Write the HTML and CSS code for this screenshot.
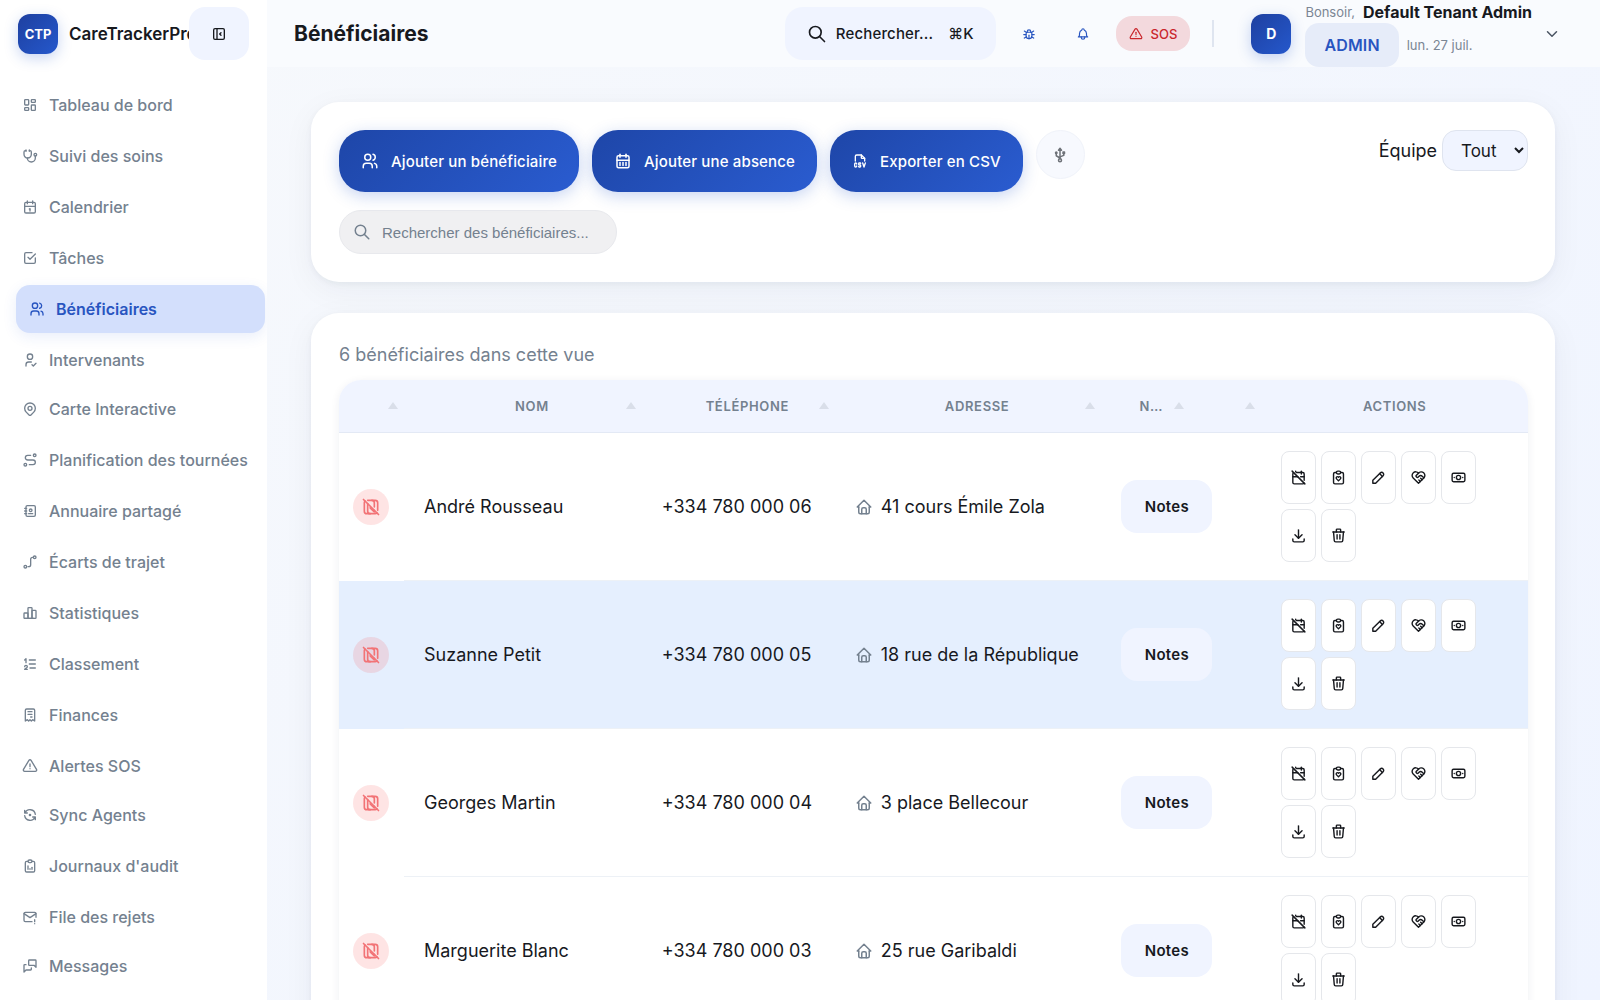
FILE: index.html
```html
<!DOCTYPE html>
<html lang="fr">
<head>
    <meta charset="UTF-8">
    <meta name="viewport" content="width=device-width, initial-scale=1.0">
    <title>Bénéficiaires - CareTrackerPro</title>
    <link rel="stylesheet" href="styles.css">
</head>
<body>
    <!-- Icons -->
    <svg class="sprite" aria-hidden="true">
        <symbol id="i-collapse" viewBox="0 0 24 24"><path d="M4 6a2 2 0 0 1 2 -2h12a2 2 0 0 1 2 2v12a2 2 0 0 1 -2 2h-12a2 2 0 0 1 -2 -2z"/><path d="M9 4v16"/><path d="M15 10l-2 2l2 2"/></symbol>
        <symbol id="i-dashboard" viewBox="0 0 24 24"><path d="M5 4h4a1 1 0 0 1 1 1v6a1 1 0 0 1 -1 1h-4a1 1 0 0 1 -1 -1v-6a1 1 0 0 1 1 -1"/><path d="M5 16h4a1 1 0 0 1 1 1v2a1 1 0 0 1 -1 1h-4a1 1 0 0 1 -1 -1v-2a1 1 0 0 1 1 -1"/><path d="M15 12h4a1 1 0 0 1 1 1v6a1 1 0 0 1 -1 1h-4a1 1 0 0 1 -1 -1v-6a1 1 0 0 1 1 -1"/><path d="M15 4h4a1 1 0 0 1 1 1v2a1 1 0 0 1 -1 1h-4a1 1 0 0 1 -1 -1v-2a1 1 0 0 1 1 -1"/></symbol>
        <symbol id="i-stethoscope" viewBox="0 0 24 24"><path d="M6 4h-1a2 2 0 0 0 -2 2v3.500a5.500 5.500 0 0 0 11 0v-3.500a2 2 0 0 0 -2 -2h-1"/><path d="M8 15a6 6 0 1 0 12 0v-3"/><path d="M11 3v2"/><path d="M6 3v2"/><path d="M20 10m-2 0a2 2 0 1 0 4 0a2 2 0 1 0 -4 0"/></symbol>
        <symbol id="i-calendar" viewBox="0 0 24 24"><path d="M4 7a2 2 0 0 1 2 -2h12a2 2 0 0 1 2 2v12a2 2 0 0 1 -2 2h-12a2 2 0 0 1 -2 -2v-12z"/><path d="M16 3v4"/><path d="M8 3v4"/><path d="M4 11h16"/><path d="M11 15h1"/><path d="M12 15v3"/></symbol>
        <symbol id="i-check" viewBox="0 0 24 24"><path d="M9 11l3 3l8 -8"/><path d="M20 12v6a2 2 0 0 1 -2 2h-12a2 2 0 0 1 -2 -2v-12a2 2 0 0 1 2 -2h9"/></symbol>
        <symbol id="i-users" viewBox="0 0 24 24"><path d="M9 7m-4 0a4 4 0 1 0 8 0a4 4 0 1 0 -8 0"/><path d="M3 21v-2a4 4 0 0 1 4 -4h4a4 4 0 0 1 4 4v2"/><path d="M16 3.130a4 4 0 0 1 0 7.750"/><path d="M21 21v-2a4 4 0 0 0 -3 -3.850"/></symbol>
        <symbol id="i-user-check" viewBox="0 0 24 24"><path d="M8 7a4 4 0 1 0 8 0a4 4 0 0 0 -8 0"/><path d="M6 21v-2a4 4 0 0 1 4 -4h4"/><path d="M15 19l2 2l4 -4"/></symbol>
        <symbol id="i-pin" viewBox="0 0 24 24"><path d="M9 11a3 3 0 1 0 6 0a3 3 0 0 0 -6 0"/><path d="M17.657 16.657l-4.243 4.243a2 2 0 0 1 -2.827 0l-4.244 -4.243a8 8 0 1 1 11.314 0z"/></symbol>
        <symbol id="i-route" viewBox="0 0 24 24"><path d="M3 19a2 2 0 1 0 4 0a2 2 0 0 0 -4 0"/><path d="M19 7a2 2 0 1 0 0 -4a2 2 0 0 0 0 4z"/><path d="M11 19h5.500a3.500 3.500 0 0 0 0 -7h-8a3.500 3.500 0 0 1 0 -7h4.500"/></symbol>
        <symbol id="i-book" viewBox="0 0 24 24"><path d="M20 6v12a2 2 0 0 1 -2 2h-10a2 2 0 0 1 -2 -2v-12a2 2 0 0 1 2 -2h10a2 2 0 0 1 2 2z"/><path d="M10 16h6"/><path d="M13 11m-2 0a2 2 0 1 0 4 0a2 2 0 1 0 -4 0"/><path d="M4 8h3"/><path d="M4 12h3"/><path d="M4 16h3"/></symbol>
        <symbol id="i-path" viewBox="0 0 24 24"><path d="M3 19a2 2 0 1 0 4 0a2 2 0 0 0 -4 0"/><path d="M19 7a2 2 0 1 0 0 -4a2 2 0 0 0 0 4z"/><path d="M9 19h1a3 3 0 0 0 3 -3v-8a3 3 0 0 1 3 -3"/></symbol>
        <symbol id="i-chart" viewBox="0 0 24 24"><path d="M3 13a1 1 0 0 1 1 -1h4a1 1 0 0 1 1 1v6a1 1 0 0 1 -1 1h-4a1 1 0 0 1 -1 -1z"/><path d="M15 9a1 1 0 0 1 1 -1h4a1 1 0 0 1 1 1v10a1 1 0 0 1 -1 1h-4a1 1 0 0 1 -1 -1z"/><path d="M9 5a1 1 0 0 1 1 -1h4a1 1 0 0 1 1 1v14a1 1 0 0 1 -1 1h-4a1 1 0 0 1 -1 -1z"/><path d="M4 20h14"/></symbol>
        <symbol id="i-list" viewBox="0 0 24 24"><path d="M11 6h9"/><path d="M11 12h9"/><path d="M12 18h8"/><path d="M4 16a2 2 0 1 1 4 0c0 .591 -.500 1 -1 1.500l-3 2.500h4"/><path d="M6 10v-6l-2 2"/></symbol>
        <symbol id="i-receipt" viewBox="0 0 24 24"><path d="M5 21v-16a2 2 0 0 1 2 -2h10a2 2 0 0 1 2 2v16l-3 -2l-2 2l-2 -2l-2 2l-2 -2l-3 2"/><path d="M9 7h6"/><path d="M9 11h6"/><path d="M13 15h2"/></symbol>
        <symbol id="i-alert" viewBox="0 0 24 24"><path d="M12 9v4"/><path d="M10.363 3.591l-8.106 13.534a1.914 1.914 0 0 0 1.636 2.871h16.214a1.914 1.914 0 0 0 1.636 -2.870l-8.106 -13.536a1.914 1.914 0 0 0 -3.274 0z"/><path d="M12 16h.01"/></symbol>
        <symbol id="i-sync" viewBox="0 0 24 24"><path d="M20 11a8.100 8.100 0 0 0 -15.500 -2m-.5 -4v4h4"/><path d="M4 13a8.100 8.100 0 0 0 15.500 2m.5 4v-4h-4"/><path d="M12 12m-1 0a1 1 0 1 0 2 0a1 1 0 1 0 -2 0"/></symbol>
        <symbol id="i-audit" viewBox="0 0 24 24"><path d="M9 5h-2a2 2 0 0 0 -2 2v12a2 2 0 0 0 2 2h10a2 2 0 0 0 2 -2v-12a2 2 0 0 0 -2 -2h-2"/><path d="M9 5a2 2 0 0 1 2 -2h2a2 2 0 0 1 2 2a2 2 0 0 1 -2 2h-2a2 2 0 0 1 -2 -2z"/><path d="M9 17v-5"/><path d="M12 17v-1"/><path d="M15 17v-3"/></symbol>
        <symbol id="i-mail" viewBox="0 0 24 24"><path d="M15 19h-10a2 2 0 0 1 -2 -2v-10a2 2 0 0 1 2 -2h14a2 2 0 0 1 2 2v5.500"/><path d="M3 7l9 6l9 -6"/><path d="M19 16v3"/><path d="M19 22v.01"/></symbol>
        <symbol id="i-messages" viewBox="0 0 24 24"><path d="M21 14l-3 -3h-7a1 1 0 0 1 -1 -1v-6a1 1 0 0 1 1 -1h9a1 1 0 0 1 1 1v10"/><path d="M14 15v2a1 1 0 0 1 -1 1h-7l-3 3v-10a1 1 0 0 1 1 -1h2"/></symbol>
        <symbol id="i-search" viewBox="0 0 24 24"><path d="M10 10m-7 0a7 7 0 1 0 14 0a7 7 0 1 0 -14 0"/><path d="M21 21l-6 -6"/></symbol>
        <symbol id="i-bug" viewBox="0 0 24 24"><path d="M9 9v-1a3 3 0 0 1 6 0v1"/><path d="M8 9h8a6 6 0 0 1 1 3v3a5 5 0 0 1 -10 0v-3a6 6 0 0 1 1 -3"/><path d="M3 13h4"/><path d="M17 13h4"/><path d="M12 20v-6"/><path d="M4 19l3.350 -2"/><path d="M20 19l-3.350 -2"/><path d="M4 7l3.750 2.400"/><path d="M20 7l-3.750 2.400"/></symbol>
        <symbol id="i-bell" viewBox="0 0 24 24"><path d="M10 5a2 2 0 1 1 4 0a7 7 0 0 1 4 6v3a4 4 0 0 0 2 3h-16a4 4 0 0 0 2 -3v-3a7 7 0 0 1 4 -6"/><path d="M9 17v1a3 3 0 0 0 6 0v-1"/></symbol>
        <symbol id="i-chevron" viewBox="0 0 24 24"><path d="M6 9l6 6l6 -6"/></symbol>
        <symbol id="i-month" viewBox="0 0 24 24"><path d="M4 7a2 2 0 0 1 2 -2h12a2 2 0 0 1 2 2v12a2 2 0 0 1 -2 2h-12a2 2 0 0 1 -2 -2v-12z"/><path d="M16 3v4"/><path d="M8 3v4"/><path d="M4 11h16"/><path d="M8 14v4"/><path d="M12 14v4"/><path d="M16 14v4"/></symbol>
        <symbol id="i-csv" viewBox="0 0 24 24"><path d="M14 3v4a1 1 0 0 0 1 1h4"/><path d="M5 12v-7a2 2 0 0 1 2 -2h7l5 5v4"/><path d="M7 16.500a1.500 1.500 0 0 0 -3 0v3a1.500 1.500 0 0 0 3 0"/><path d="M10 20.250c0 .414 .336 .750 .750 .750h1.250a1 1 0 0 0 1 -1v-1a1 1 0 0 0 -1 -1h-1a1 1 0 0 1 -1 -1v-1a1 1 0 0 1 1 -1h1.250a.750 .750 0 0 1 .750 .750"/><path d="M16 15l2 6l2 -6"/></symbol>
        <symbol id="i-usb" viewBox="0 0 24 24"><path d="M12 19m-2 0a2 2 0 1 0 4 0a2 2 0 1 0 -4 0"/><path d="M12 17v-11.500"/><path d="M7 10v3l5 3"/><path d="M12 14.500l5 -2v-2.500"/><path d="M16 10h2v-2h-2z"/><path d="M7 9m-1 0a1 1 0 1 0 2 0a1 1 0 1 0 -2 0"/><path d="M10 5.500h4l-2 -2.500z"/></symbol>
        <symbol id="i-nfc-off" viewBox="0 0 24 24"><path d="M11 20a3 3 0 0 1 -3 -3v-9"/><path d="M13 4a3 3 0 0 1 3 3v5m0 4v2l-5 -5"/><path d="M8 4h9a3 3 0 0 1 3 3v9m-.873 3.116a2.990 2.990 0 0 1 -2.127 .884h-10a3 3 0 0 1 -3 -3v-10c0 -.830 .337 -1.582 .882 -2.125"/><path d="M3 3l18 18"/></symbol>
        <symbol id="i-home" viewBox="0 0 24 24"><path d="M5 12l-2 0l9 -9l9 9l-2 0"/><path d="M5 12v7a2 2 0 0 0 2 2h10a2 2 0 0 0 2 -2v-7"/><path d="M9 21v-6a2 2 0 0 1 2 -2h2a2 2 0 0 1 2 2v6"/></symbol>
        <symbol id="i-cal-off" viewBox="0 0 24 24"><path d="M9 5h9a2 2 0 0 1 2 2v9m-.184 3.839a2 2 0 0 1 -1.816 1.161h-12a2 2 0 0 1 -2 -2v-12a2 2 0 0 1 1.158 -1.815"/><path d="M16 3v4"/><path d="M8 3v1"/><path d="M4 11h7m4 0h5"/><path d="M3 3l18 18"/></symbol>
        <symbol id="i-clip-heart" viewBox="0 0 24 24"><path d="M9 5h-2a2 2 0 0 0 -2 2v12a2 2 0 0 0 2 2h10a2 2 0 0 0 2 -2v-12a2 2 0 0 0 -2 -2h-2"/><path d="M9 5a2 2 0 0 1 2 -2h2a2 2 0 0 1 2 2a2 2 0 0 1 -2 2h-2a2 2 0 0 1 -2 -2z"/><path d="M11.993 16.750l2.747 -2.815a1.900 1.900 0 0 0 0 -2.632a1.775 1.775 0 0 0 -2.560 0l-.183 .188l-.183 -.189a1.775 1.775 0 0 0 -2.560 0a1.899 1.899 0 0 0 0 2.632l2.738 2.825z"/></symbol>
        <symbol id="i-pencil" viewBox="0 0 24 24"><path d="M4 20h4l10.500 -10.500a2.828 2.828 0 1 0 -4 -4l-10.500 10.500v4"/><path d="M13.500 6.500l4 4"/></symbol>
        <symbol id="i-heart-hand" viewBox="0 0 24 24"><path d="M19.500 12.572l-7.500 7.428l-7.500 -7.428a5 5 0 1 1 7.500 -6.566a5 5 0 1 1 7.500 6.572"/><path d="M12 6l-3.293 3.293a1 1 0 0 0 0 1.414l.543 .543c.690 .690 1.810 .690 2.500 0l1 -1a3.182 3.182 0 0 1 4.500 0l2.250 2.250"/><path d="M12.500 15.500l2 2"/><path d="M15 13l2 2"/></symbol>
        <symbol id="i-cash" viewBox="0 0 24 24"><path d="M12 12m-3 0a3 3 0 1 0 6 0a3 3 0 1 0 -6 0"/><path d="M3 8a2 2 0 0 1 2 -2h14a2 2 0 0 1 2 2v8a2 2 0 0 1 -2 2h-14a2 2 0 0 1 -2 -2z"/><path d="M18 12h.01"/><path d="M6 12h.01"/></symbol>
        <symbol id="i-download" viewBox="0 0 24 24"><path d="M4 17v2a2 2 0 0 0 2 2h12a2 2 0 0 0 2 -2v-2"/><path d="M7 11l5 5l5 -5"/><path d="M12 4v12"/></symbol>
        <symbol id="i-trash" viewBox="0 0 24 24"><path d="M4 7h16"/><path d="M10 11v6"/><path d="M14 11v6"/><path d="M5 7l1 12a2 2 0 0 0 2 2h8a2 2 0 0 0 2 -2l1 -12"/><path d="M9 7v-3a1 1 0 0 1 1 -1h4a1 1 0 0 1 1 1v3"/></symbol>
    </svg>

    <div class="app">
        <aside class="sidebar">
            <div class="brand">
                <span class="brand-logo">CTP</span>
                <span class="brand-name">CareTrackerPro</span>
                <button class="collapse-btn" aria-label="Réduire le menu"><svg class="icon"><use href="#i-collapse"/></svg></button>
            </div>
            <nav class="nav">
                <div class="nav-group">
                    <a href="#" class="nav-item"><svg class="icon"><use href="#i-dashboard"/></svg>Tableau de bord</a>
                    <a href="#" class="nav-item"><svg class="icon"><use href="#i-stethoscope"/></svg>Suivi des soins</a>
                    <a href="#" class="nav-item"><svg class="icon"><use href="#i-calendar"/></svg>Calendrier</a>
                    <a href="#" class="nav-item"><svg class="icon"><use href="#i-check"/></svg>Tâches</a>
                    <a href="#" class="nav-item active"><svg class="icon"><use href="#i-users"/></svg>Bénéficiaires</a>
                    <a href="#" class="nav-item"><svg class="icon"><use href="#i-user-check"/></svg>Intervenants</a>
                </div>
                <div class="nav-group">
                    <a href="#" class="nav-item"><svg class="icon"><use href="#i-pin"/></svg>Carte Interactive</a>
                    <a href="#" class="nav-item"><svg class="icon"><use href="#i-route"/></svg>Planification des tournées</a>
                    <a href="#" class="nav-item"><svg class="icon"><use href="#i-book"/></svg>Annuaire partagé</a>
                    <a href="#" class="nav-item"><svg class="icon"><use href="#i-path"/></svg>Écarts de trajet</a>
                    <a href="#" class="nav-item"><svg class="icon"><use href="#i-chart"/></svg>Statistiques</a>
                    <a href="#" class="nav-item"><svg class="icon"><use href="#i-list"/></svg>Classement</a>
                    <a href="#" class="nav-item"><svg class="icon"><use href="#i-receipt"/></svg>Finances</a>
                    <a href="#" class="nav-item"><svg class="icon"><use href="#i-alert"/></svg>Alertes SOS</a>
                </div>
                <div class="nav-group">
                    <a href="#" class="nav-item"><svg class="icon"><use href="#i-sync"/></svg>Sync Agents</a>
                    <a href="#" class="nav-item"><svg class="icon"><use href="#i-audit"/></svg>Journaux d'audit</a>
                    <a href="#" class="nav-item"><svg class="icon"><use href="#i-mail"/></svg>File des rejets</a>
                </div>
                <div class="nav-group">
                    <a href="#" class="nav-item"><svg class="icon"><use href="#i-messages"/></svg>Messages</a>
                </div>
            </nav>
        </aside>

        <div class="page">
            <header class="topbar">
                <h1>Bénéficiaires</h1>
                <button class="quick-search"><svg class="icon"><use href="#i-search"/></svg><span>Rechercher...</span><span>⌘K</span></button>
                <button class="icon-btn" aria-label="Signaler un bug"><svg class="icon"><use href="#i-bug"/></svg></button>
                <button class="icon-btn" aria-label="Notifications"><svg class="icon"><use href="#i-bell"/></svg></button>
                <button class="sos-btn"><svg class="icon"><use href="#i-alert"/></svg>SOS</button>
                <div class="user">
                    <span class="avatar">D</span>
                    <div class="user-info">
                        <div class="user-line"><span class="muted">Bonsoir,</span><strong>Default Tenant Admin</strong></div>
                        <div class="user-line"><span class="role">ADMIN</span><span class="muted">lun. 27 juil.</span></div>
                    </div>
                    <button class="user-toggle" aria-label="Menu utilisateur"><svg class="icon"><use href="#i-chevron"/></svg></button>
                </div>
            </header>

            <main class="content">
                <section class="card toolbar">
                    <div class="toolbar-row">
                        <button class="btn-primary"><svg class="icon"><use href="#i-users"/></svg>Ajouter un bénéficiaire</button>
                        <button class="btn-primary"><svg class="icon"><use href="#i-month"/></svg>Ajouter une absence</button>
                        <button class="btn-primary"><svg class="icon icon-sm"><use href="#i-csv"/></svg>Exporter en CSV</button>
                        <button class="btn-round" aria-label="Lecteur USB"><svg class="icon"><use href="#i-usb"/></svg></button>
                        <div class="team">
                            <label for="team">Équipe</label>
                            <select id="team"><option>Tout</option></select>
                        </div>
                    </div>
                    <div class="search-box">
                        <svg class="icon"><use href="#i-search"/></svg>
                        <input type="text" aria-label="Rechercher des bénéficiaires" placeholder="Rechercher des bénéficiaires...">
                    </div>
                </section>

                <section class="card list">
                    <p class="count">6 bénéficiaires dans cette vue</p>
                    <div class="table-wrap">
                        <table>
                            <colgroup>
                                <col class="c-status"><col class="c-name"><col class="c-phone"><col><col class="c-notes"><col class="c-extra"><col>
                            </colgroup>
                            <thead>
                                <tr>
                                    <th class="sortable"></th>
                                    <th class="sortable"><div>Nom</div></th>
                                    <th class="sortable"><div>Téléphone</div></th>
                                    <th class="sortable"><div>Adresse</div></th>
                                    <th class="sortable"><div>Notes</div></th>
                                    <th class="sortable"></th>
                                    <th>Actions</th>
                                </tr>
                            </thead>
                            <tbody id="rows"></tbody>
                        </table>
                    </div>
                </section>
            </main>
        </div>
    </div>

    <script src="app.js"></script>
</body>
</html>
```
FILE: app.js
```js
const people = [
    { name: 'André Rousseau', phone: '+334 780 000 06', address: '41 cours Émile Zola' },
    { name: 'Suzanne Petit', phone: '+334 780 000 05', address: '18 rue de la République', selected: true },
    { name: 'Georges Martin', phone: '+334 780 000 04', address: '3 place Bellecour' },
    { name: 'Marguerite Blanc', phone: '+334 780 000 03', address: '25 rue Garibaldi' }
];

const actions = [
    ['cal-off', 'Absence'],
    ['clip-heart', 'Plan de soins'],
    ['pencil', 'Modifier'],
    ['heart-hand', 'Aidants'],
    ['cash', 'Facturation'],
    ['download', 'Télécharger'],
    ['trash', 'Supprimer']
];

const icon = name => `<svg class="icon"><use href="#i-${name}"/></svg>`;

document.getElementById('rows').innerHTML = people.map(p => `
    <tr class="${p.selected ? 'selected' : ''}">
        <td class="status"><span class="badge">${icon('nfc-off')}</span></td>
        <td>${p.name}</td>
        <td>${p.phone}</td>
        <td><div class="address">${icon('home')}${p.address}</div></td>
        <td class="notes"><button class="btn-notes">Notes</button></td>
        <td></td>
        <td><div class="actions">${actions.map(([i, label]) =>
            `<button aria-label="${label}">${icon(i)}</button>`).join('')}</div></td>
    </tr>`).join('');
```
FILE: styles.css
```css
* {
    box-sizing: border-box;
}
body {
    margin: 0;
    font-family: Inter, "Liberation Sans", sans-serif;
    font-size: 18px;
    color: #17191e;
    background: linear-gradient(135deg, #f7f9fc, #eff4ff);
}
button, select {
    font-family: inherit;
    color: inherit;
    border: none;
    cursor: pointer;
}
.sprite {
    position: absolute;
    width: 0;
    height: 0;
}
.icon {
    width: 16px;
    height: 16px;
    flex: none;
    fill: none;
    stroke: currentColor;
    stroke-width: 2;
    stroke-linecap: round;
    stroke-linejoin: round;
}
.app {
    display: flex;
    height: 100vh;
    overflow: hidden;
}

/* Sidebar */
.sidebar {
    width: 267px;
    flex: none;
    background: #fff;
    overflow: hidden;
}
.brand {
    display: flex;
    align-items: center;
    height: 67px;
    padding: 0 18px;
}
.brand-logo, .avatar {
    display: flex;
    align-items: center;
    justify-content: center;
    flex: none;
    width: 40px;
    height: 40px;
    border-radius: 12px;
    background: linear-gradient(135deg, #1e40a0, #2558cc);
    box-shadow: 0 4px 14px rgba(37, 88, 204, 0.25);
    color: #fff;
    font-size: 13px;
    font-weight: 700;
}
.avatar {
    font-size: 14px;
}
.brand-name {
    flex: 1;
    min-width: 0;
    margin-left: 11px;
    overflow: hidden;
    font-size: 17px;
    font-weight: 600;
    white-space: nowrap;
}
.collapse-btn {
    display: flex;
    align-items: center;
    justify-content: center;
    flex: none;
    width: 60px;
    height: 53px;
    border-radius: 16px;
    background: #f0f4ff;
}
.nav {
    display: flex;
    flex-direction: column;
    gap: 1px;
    padding: 14px 2px 0 8px;
}
.nav-group {
    display: flex;
    flex-direction: column;
    gap: 3px;
}
.nav-item {
    display: flex;
    align-items: center;
    gap: 11px;
    height: 48px;
    padding: 0 14px;
    border-radius: 14px;
    color: #74818f;
    font-size: 16px;
    font-weight: 500;
    text-decoration: none;
    white-space: nowrap;
}
.nav-item.active {
    margin-left: 8px;
    padding-left: 13px;
    background: #d3dffc;
    box-shadow: 0 4px 14px rgba(37, 88, 204, 0.1);
    color: #2855c0;
    font-weight: 600;
}

/* Top bar */
.page {
    flex: 1;
    min-width: 0;
    display: flex;
    flex-direction: column;
}
.topbar {
    display: flex;
    align-items: center;
    flex: none;
    height: 67px;
    padding: 0 39px 0 27px;
    background: #f9fbfe;
}
.topbar h1 {
    flex: 1;
    margin: 0;
    font-size: 21px;
    font-weight: 700;
}
.quick-search {
    display: flex;
    align-items: center;
    height: 53px;
    padding: 0 22px;
    border-radius: 18px;
    background: #f0f4ff;
    font-size: 15px;
    font-weight: 500;
    letter-spacing: 0.01em;
}
.quick-search .icon {
    width: 20px;
    height: 20px;
}
.quick-search span {
    margin-left: 9px;
}
.quick-search span + span {
    margin-left: 15px;
}
.icon-btn {
    display: flex;
    align-items: center;
    justify-content: center;
    width: 34px;
    height: 34px;
    margin-left: 16px;
    padding: 0;
    background: none;
    color: #2855c0;
}
.icon-btn + .icon-btn {
    margin-left: 20px;
}
.icon-btn .icon {
    width: 14px;
    height: 14px;
}
.sos-btn {
    display: flex;
    align-items: center;
    gap: 8px;
    height: 35px;
    margin-left: 16px;
    padding: 0 13px;
    border-radius: 16px;
    background: #f3d9dd;
    color: #c9252b;
    font-size: 13px;
    font-weight: 500;
}
.sos-btn .icon {
    width: 14px;
    height: 14px;
}
.user {
    display: flex;
    align-items: center;
    margin-left: 22px;
}
.user::before {
    content: "";
    width: 2px;
    height: 27px;
    margin-right: 37px;
    background: #dfe5f0;
}
.user-info {
    margin-left: 14px;
}
.user-line {
    display: flex;
    align-items: center;
    gap: 8px;
    font-size: 16px;
    line-height: 22px;
    white-space: nowrap;
}
.muted {
    color: #7b8694;
    font-size: 13px;
}
.role {
    padding: 0 19px;
    border-radius: 14px;
    background: #e6ecf9;
    color: #2855c0;
    font-weight: 600;
    letter-spacing: 0.01em;
    line-height: 44px;
}
.user-toggle {
    display: flex;
    margin-left: 11px;
    padding: 0;
    background: none;
    color: #4b5563;
}
.user-toggle .icon {
    width: 18px;
    height: 18px;
}

/* Content */
.content {
    display: flex;
    flex-direction: column;
    flex: 1;
    gap: 31px;
    padding: 35px 45px 35px 44px;
    overflow-y: auto;
    scrollbar-width: none;
}
.card {
    flex: none;
    padding: 28px 27px 28px 28px;
    border-radius: 28px;
    background: #fff;
    box-shadow: 0 2px 6px rgba(20, 30, 50, 0.05), 0 8px 32px rgba(20, 30, 60, 0.05);
}
.toolbar-row {
    display: flex;
    align-items: flex-start;
    gap: 13px;
}
.btn-primary {
    display: flex;
    align-items: center;
    gap: 12px;
    height: 62px;
    padding: 0 22px;
    border-radius: 26px;
    background: linear-gradient(135deg, #1e46a8, #2a5cd0);
    box-shadow: 0 4px 16px rgba(37, 88, 204, 0.25);
    color: #fff;
    font-size: 15px;
    font-weight: 500;
    letter-spacing: 0.01em;
}
.btn-primary .icon, .btn-round .icon {
    width: 18px;
    height: 18px;
}
.btn-primary .icon-sm {
    width: 16px;
    height: 16px;
}
.btn-round {
    display: flex;
    align-items: center;
    justify-content: center;
    width: 49px;
    height: 49px;
    padding: 0;
    border: 1px solid #f0f3fa;
    border-radius: 50%;
    background: #f7f9fe;
    color: #6e7278;
}
.team {
    display: flex;
    align-items: center;
    gap: 5px;
    margin-left: auto;
}
.team select {
    width: 86px;
    height: 41px;
    padding: 0 0 0 14px;
    border: 1px solid #dfe4ef;
    border-radius: 14px;
    background: #f0f4ff;
    font-size: 17px;
}
.search-box {
    display: flex;
    align-items: center;
    gap: 11px;
    width: 278px;
    height: 44px;
    margin-top: 18px;
    padding: 0 13px;
    border: 1px solid #e8e9ed;
    border-radius: 22px;
    background: #f0f0f2;
    color: #74818f;
}
.search-box .icon {
    width: 18px;
    height: 18px;
}
.search-box input {
    flex: 1;
    min-width: 0;
    padding: 0;
    border: none;
    outline: none;
    background: none;
    font-family: "Liberation Sans", Arial, sans-serif;
    font-size: 15px;
}
.search-box input::placeholder {
    color: #74818f;
}
.count {
    margin: 0;
    color: #74818f;
    font-size: 18px;
    line-height: 28px;
}

/* Table */
.table-wrap {
    margin-top: 11px;
    border-radius: 22px;
    overflow: hidden;
    box-shadow: 0 2px 10px rgba(30, 41, 80, 0.07);
}
table {
    width: 100%;
    table-layout: fixed;
    border-collapse: separate;
    border-spacing: 0;
}
.c-status {
    width: 65px;
}
.c-name {
    width: 20%;
}
.c-phone {
    width: 193px;
}
.c-notes {
    width: 89px;
}
.c-extra {
    width: 71px;
}
th {
    height: 53px;
    padding: 0;
    border-bottom: 1px solid #e3e9f5;
    background: #f0f4ff;
    color: #74818f;
    font-size: 13px;
    font-weight: 600;
    letter-spacing: 0.05em;
    text-transform: uppercase;
}
th.sortable {
    position: relative;
    padding: 0 20px 0 38px;
}
th.sortable::after {
    content: "";
    position: absolute;
    top: 22px;
    right: 6px;
    border: 5px solid transparent;
    border-top: none;
    border-bottom: 7px solid #d9dee9;
}
th div {
    overflow: hidden;
    text-overflow: ellipsis;
    white-space: nowrap;
}
td {
    height: 148px;
    padding: 0 20px;
    border-bottom: 1px solid #edf1f6;
    white-space: nowrap;
}
td.status {
    padding: 0 14px;
    border-bottom: none;
}
td.notes {
    padding-right: 0;
}
.selected td {
    background: #e5effe;
}
.badge {
    display: flex;
    align-items: center;
    justify-content: center;
    width: 36px;
    height: 36px;
    border-radius: 50%;
    background: rgba(248, 72, 72, 0.15);
    color: #f27376;
}
.badge .icon {
    width: 20px;
    height: 20px;
}
.address {
    display: flex;
    align-items: center;
    gap: 8px;
}
.address .icon {
    color: #74818f;
    width: 18px;
    height: 18px;
}
.btn-notes {
    width: 91px;
    height: 53px;
    padding: 0;
    border-radius: 16px;
    background: #f0f4ff;
    font-size: 15px;
    font-weight: 600;
    letter-spacing: 0.02em;
}
.actions {
    display: flex;
    flex-wrap: wrap;
    gap: 5px;
}
.actions button {
    display: flex;
    align-items: center;
    justify-content: center;
    width: 35px;
    height: 53px;
    padding: 0;
    border: 1px solid #e5e7eb;
    border-radius: 8px;
    background: #fff;
}
.actions .icon {
    width: 17px;
    height: 17px;
}
```
